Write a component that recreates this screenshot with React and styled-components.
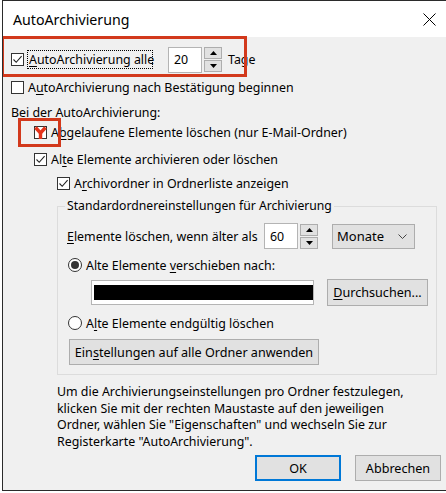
import React from "react";
import styled, { createGlobalStyle } from "styled-components";

const GlobalStyle = createGlobalStyle`
  html, body {
    margin: 0;
    padding: 0;
    background: #fff;
  }
  body {
    font-family: "Noto Sans", "Open Sans", sans-serif;
    font-size: 12.4px;
    color: #000;
  }
`;

const Window = styled.div`
  box-sizing: border-box;
  margin-left: 2px;
  width: 444px;
  height: 491px;
  border-top: 1px solid #2b2b2b;
  border-left: 1px solid #2b2b2b;
  border-bottom: 1px solid #2b2b2b;
  display: flex;
  flex-direction: column;
  overflow: hidden;
`;

const TitleBar = styled.div`
  height: 36px;
  background: #fff;
  display: flex;
  align-items: center;
  justify-content: space-between;
  padding: 0 10px 0 10px;
  font-size: 14.2px;
`;

const CloseIcon = styled.svg`
  width: 13px;
  height: 13px;
`;

const Body = styled.div`
  flex: 1;
  background: #f0f0f0;
  padding: 10px 0 0 8px;
  position: relative;
`;

const Row = styled.div`
  display: flex;
  align-items: center;
  height: ${(p) => p.$h || 20}px;
  margin-top: ${(p) => p.$mt || 0}px;
  padding-left: ${(p) => p.$indent || 0}px;
  white-space: nowrap;
`;

const Box = styled.span`
  box-sizing: border-box;
  width: 13px;
  height: 13px;
  border: 1px solid #333;
  background: #fff;
  display: inline-flex;
  align-items: center;
  justify-content: center;
  flex: none;
  position: relative;
`;

const Radio = styled.span`
  box-sizing: border-box;
  width: 14px;
  height: 14px;
  border: 1px solid #333;
  border-radius: 50%;
  background: #fff;
  display: inline-flex;
  align-items: center;
  justify-content: center;
  flex: none;
  &::after {
    content: "";
    width: 8px;
    height: 8px;
    border-radius: 50%;
    background: ${(p) => (p.$on ? "#333" : "transparent")};
  }
`;

const Label = styled.span`
  margin-left: ${(p) => p.$ml ?? 4}px;
  width: ${(p) => (p.$w ? `${p.$w}px` : "auto")};
  flex: none;
`;

const Focus = styled.span`
  margin-left: 3px;
  width: 123px;
  height: 17px;
  display: inline-flex;
  align-items: center;
  padding-left: 1px;
  border: 1px dotted #000;
  flex: none;
`;

const Key = styled.u`
  text-decoration: underline;
  text-underline-offset: 2px;
`;

const Field = styled.span`
  box-sizing: border-box;
  width: ${(p) => p.$w}px;
  height: ${(p) => p.$h || 26}px;
  margin-left: ${(p) => p.$ml || 0}px;
  border: 1px solid #b4b4b4;
  background: #fff;
  display: inline-flex;
  align-items: center;
  padding-left: 5px;
  flex: none;
`;

const Spin = styled.span`
  display: inline-flex;
  flex-direction: column;
  gap: 1px;
  margin-left: 2px;
  flex: none;
`;

const SpinBtn = styled.span`
  box-sizing: border-box;
  width: 18px;
  height: 12px;
  background: #e1e1e1;
  border: 1px solid #adadad;
  display: flex;
  align-items: center;
  justify-content: center;
`;

const Combo = styled.span`
  box-sizing: border-box;
  width: 83px;
  height: 25px;
  margin-left: 14px;
  background: #e1e1e1;
  border: 1px solid #adadad;
  display: inline-flex;
  align-items: center;
  justify-content: space-between;
  padding: 0 7px 0 4px;
  font-size: 13px;
  flex: none;
`;

const Redacted = styled.span`
  display: block;
  width: 224px;
  height: 15px;
  margin-left: -3px;
  background: #000;
`;

const Group = styled.fieldset`
  box-sizing: border-box;
  margin: 5px 0 0 46px;
  width: 380px;
  height: 177px;
  padding: 0 0 0 9px;
  border: 1px solid #dcdcdc;
`;

const Legend = styled.legend`
  padding: 0 2px;
  margin-left: -2px;
  line-height: 16px;
  font-size: 12.2px;
`;

const Button = styled.span`
  box-sizing: border-box;
  display: inline-flex;
  align-items: center;
  justify-content: center;
  width: ${(p) => p.$w}px;
  height: ${(p) => p.$h || 26}px;
  margin-left: ${(p) => p.$ml || 0}px;
  background: #e1e1e1;
  border: ${(p) => (p.$primary ? "2px solid #0078d7" : "1px solid #adadad")};
  font-size: 12.6px;
  flex: none;
`;

const Note = styled.p`
  margin: 9px 0 0 46px;
  line-height: 16.5px;
`;

const Footer = styled.div`
  display: flex;
  margin: 5px 0 0 244px;
  gap: 14px;
`;

const Mark = styled.span`
  position: absolute;
  border: 3px solid #d2391c;
  box-sizing: border-box;
  pointer-events: none;
`;

const Check = () => (
  <svg width="11" height="11" viewBox="0 0 11 11">
    <path d="M1.5 5.5 L4.2 8.3 L9.6 2.2" fill="none" stroke="#222" strokeWidth="1.1" />
  </svg>
);

const RedCheck = () => (
  <svg width="13" height="13" viewBox="0 0 13 13" style={{ position: "absolute", left: -1, top: -1 }}>
    <path d="M1.5 1.5 L6.5 7 L11.5 1.5" fill="none" stroke="#e3341c" strokeWidth="3.4" />
    <path d="M6.5 6 L6.5 13" fill="none" stroke="#e3341c" strokeWidth="3.4" />
  </svg>
);

const Up = () => (
  <svg width="7" height="4" viewBox="0 0 7 4">
    <path d="M0 4 L3.5 0 L7 4 Z" fill="#000" />
  </svg>
);

const Down = () => (
  <svg width="7" height="4" viewBox="0 0 7 4">
    <path d="M0 0 L3.5 4 L7 0 Z" fill="#000" />
  </svg>
);

const Spinner = () => (
  <Spin>
    <SpinBtn><Up /></SpinBtn>
    <SpinBtn><Down /></SpinBtn>
  </Spin>
);

export default function App() {
  return (
    <>
      <GlobalStyle />
      <Window>
        <TitleBar>
          <span>AutoArchivierung</span>
          <CloseIcon viewBox="0 0 13 13">
            <path d="M0.5 0.5 L12.5 12.5 M12.5 0.5 L0.5 12.5" stroke="#000" strokeWidth="1" />
          </CloseIcon>
        </TitleBar>
        <Body>
          <Row $h={25}>
            <Box><Check /></Box>
            <Focus><Key>A</Key>utoArchivierung alle</Focus>
            <Field $w={34} $ml={15}>20</Field>
            <Spinner />
            <Label $ml={6}>Tage</Label>
          </Row>
          <Row $mt={5}>
            <Box />
            <Label>A<Key>u</Key>toArchivierung nach Bestätigung beginnen</Label>
          </Row>
          <Row $mt={5}>
            <Label $ml={0}>Bei der AutoArchivierung:</Label>
          </Row>
          <Row $indent={23}>
            <Box><RedCheck /></Box>
            <Label>A<Key>b</Key>gelaufene Elemente löschen (nur E-Mail-Ordner)</Label>
          </Row>
          <Row $mt={7} $indent={23}>
            <Box><Check /></Box>
            <Label>Al<Key>t</Key>e Elemente archivieren oder löschen</Label>
          </Row>
          <Row $mt={4} $indent={46}>
            <Box><Check /></Box>
            <Label>A<Key>r</Key>chivordner in Ordnerliste anzeigen</Label>
          </Row>
          <Group>
            <Legend>Standardordnereinstellungen für Archivierung</Legend>
            <Row $h={26} $mt={9}>
              <Label $ml={0} $w={197}><Key>E</Key>lemente löschen, wenn älter als</Label>
              <Field $w={34}>60</Field>
              <Spinner />
              <Combo>
                Monate
                <svg width="9" height="5" viewBox="0 0 9 5">
                  <path d="M0.5 0.5 L4.5 4.5 L8.5 0.5" fill="none" stroke="#444" strokeWidth="1" />
                </svg>
              </Combo>
            </Row>
            <Row $mt={6} $indent={1}>
              <Radio $on />
              <Label>Alte Elemente <Key>v</Key>erschieben nach:</Label>
            </Row>
            <Row $h={27} $mt={4}>
              <Field $w={223} $h={25} $ml={24}>
                <Redacted />
              </Field>
              <Button $w={101} $h={27} $ml={13}><Key>D</Key>urchsuchen...</Button>
            </Row>
            <Row $mt={7} $indent={1}>
              <Radio />
              <Label>A<Key>l</Key>te Elemente endgültig löschen</Label>
            </Row>
            <Row $h={26} $mt={6} $indent={2}>
              <Button $w={250}>Ein<Key>s</Key>tellungen auf alle Ordner anwenden</Button>
            </Row>
          </Group>
          <Note>
            Um die Archivierungseinstellungen pro Ordner festzulegen,<br />
            klicken Sie mit der rechten Maustaste auf den jeweiligen<br />
            Ordner, wählen Sie "Eigenschaften" und wechseln Sie zur<br />
            Registerkarte "AutoArchivierung".
          </Note>
          <Footer>
            <Button $w={86} $primary>OK</Button>
            <Button $w={86}>Abbrechen</Button>
          </Footer>
          <Mark style={{ left: -2, top: -1, width: 246, height: 41 }} />
          <Mark style={{ left: 15, top: 81, width: 43, height: 29 }} />
        </Body>
      </Window>
    </>
  );
}
